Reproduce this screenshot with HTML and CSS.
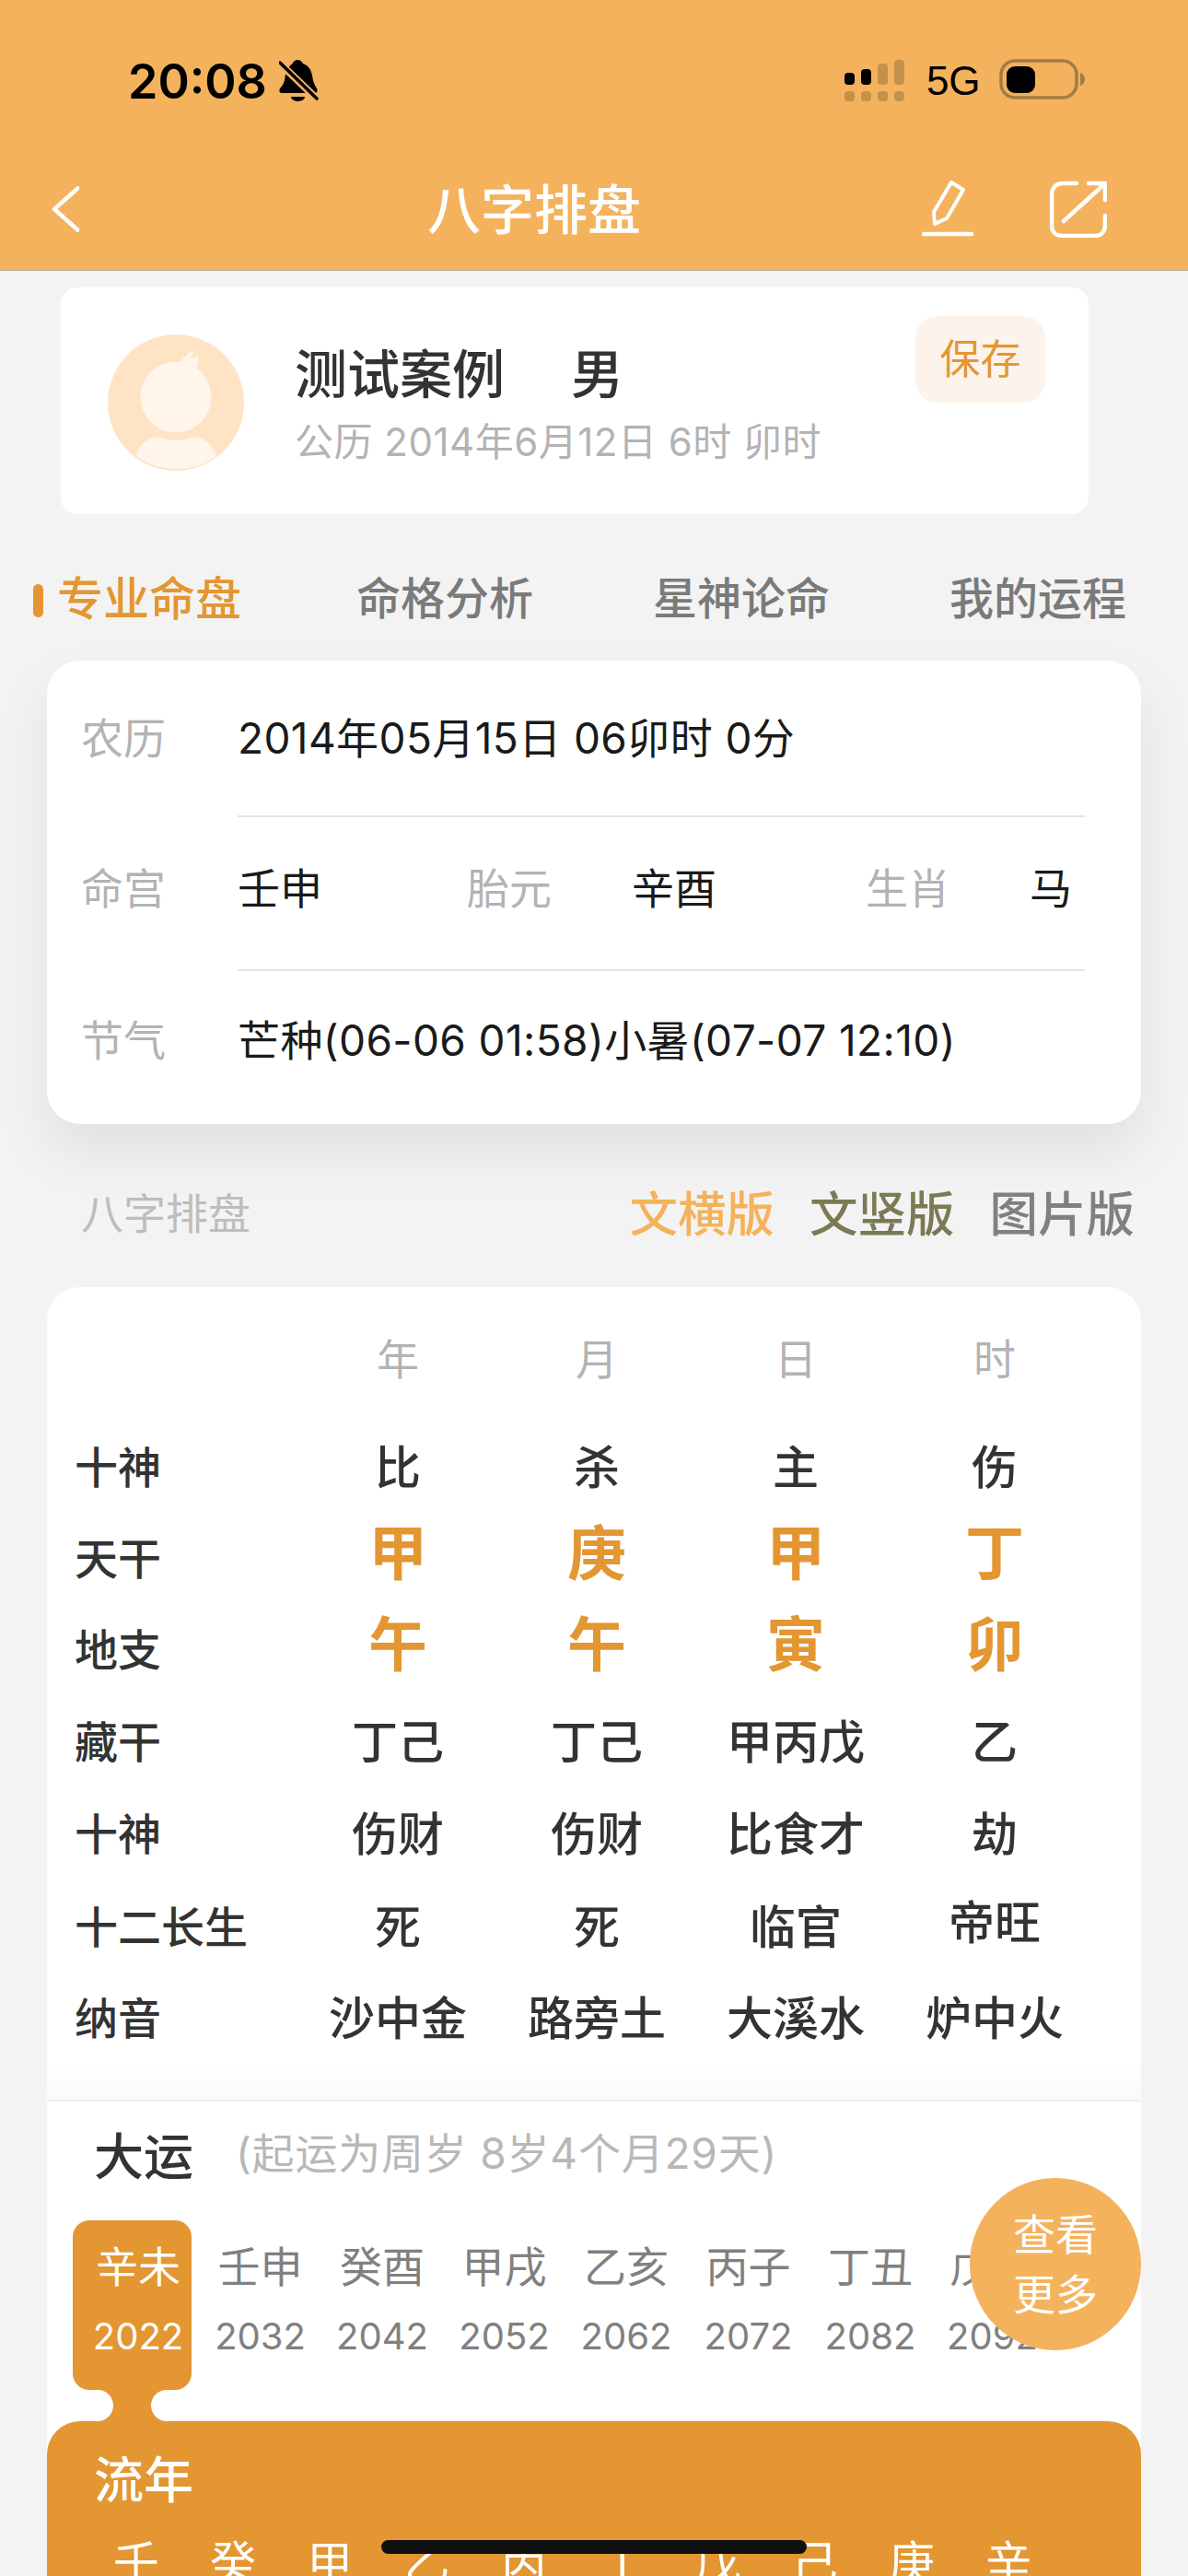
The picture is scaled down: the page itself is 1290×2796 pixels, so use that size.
FILE: index.html
```html
<!DOCTYPE html>
<html lang="zh">
<head>
    <meta charset="utf-8">
    <title>八字排盘</title>
    <link rel="stylesheet" href="styles.css">
</head>
<body>
<div class="page">
    <div class="header">
        <div class="status">
            <span class="time">20:08</span>
            <svg class="bell" width="44" height="47" viewBox="0 0 44 47">
                <path d="M20 0c3 0 5 2 6 4 6 2 9 7 10 13 1 7 3 11 5 14 1 2 1 5-2 5H3c-3 0-3-3-2-5 3-3 5-7 5.500-12 .5-7 4-12 8-15 1-2 3-4 5.500-4z"/>
                <path d="M13 40h15a7.500 5 0 0 1-15 0z"/>
                <path d="M0 3l42 40" stroke="#f4b25c" stroke-width="8"/>
                <path d="M1 3l40 39" stroke="#000" stroke-width="3.500" stroke-linecap="round"/>
            </svg>
            <svg class="signal" width="66" height="46" viewBox="0 0 66 46">
                <rect x="0" y="15" width="11" height="13" rx="4"/>
                <rect x="18" y="11" width="11" height="17" rx="4"/>
                <rect class="dim" x="36" y="5" width="11" height="23" rx="4"/>
                <rect class="dim" x="54" y="1" width="11" height="27" rx="4"/>
                <rect class="dim" x="0" y="35" width="11" height="11" rx="4"/>
                <rect class="dim" x="18" y="35" width="11" height="11" rx="4"/>
                <rect class="dim" x="36" y="35" width="11" height="11" rx="4"/>
                <rect class="dim" x="54" y="35" width="11" height="11" rx="4"/>
            </svg>
            <span class="net">5G</span>
            <svg class="battery" width="94" height="44" viewBox="0 0 94 44">
                <rect x="2" y="2" width="82" height="40" rx="15" fill="none" stroke="#a37b45" stroke-width="3.500"/>
                <rect x="8" y="8" width="31" height="29" rx="9"/>
                <path d="M88 15c3 1 5 4 5 7s-2 6-5 7z" fill="#a37b45"/>
            </svg>
        </div>
        <div class="nav">
            <svg class="back" width="30" height="50" viewBox="0 0 30 50">
                <path d="M29 2L3 25l26 23" fill="none" stroke="#fff" stroke-width="4.500" stroke-linecap="round" stroke-linejoin="round"/>
            </svg>
            <span class="nav-title">八字排盘</span>
            <svg class="pen" width="58" height="62" viewBox="0 0 58 62">
                <path d="M14 47l-1-13 19-32 13 8-18 31z" fill="none" stroke="#fff" stroke-width="4" stroke-linejoin="round"/>
                <path d="M2 58h52" stroke="#fff" stroke-width="4.500" stroke-linecap="round"/>
            </svg>
            <svg class="share" width="62" height="62" viewBox="0 0 62 62">
                <path d="M29 3H14C7 3 2 8 2 15v34c0 7 5 11 12 11h35c7 0 11-5 11-11V38" fill="none" stroke="#fff" stroke-width="4.500" stroke-linecap="round"/>
                <path d="M15 44L59 4M42 3h18v18" fill="none" stroke="#fff" stroke-width="4.500" stroke-linecap="round" stroke-linejoin="round"/>
            </svg>
        </div>
    </div>

    <div class="case-card">
        <svg class="avatar" width="148" height="148" viewBox="0 0 148 148">
            <circle cx="74" cy="74" r="74" fill="#fee3c4"/>
            <circle cx="74" cy="68" r="38.500" fill="#fff5ea"/>
            <path d="M78 30c7-8 12-12 15-12 1 2-2 7-4 9 3-2 9-4 9-3 1 6-1 12-2 13z" fill="#fff5ea"/>
            <path d="M31 132c2-14 15-20 22-21 7 1 13 4 21 4 9 0 14-3 19-4 12 1 22 9 25 21A74 74 0 0 1 31 132z" fill="#fff5ea"/>
        </svg>
        <div class="case-text">
            <div class="case-name"><span>测试案例</span><span>男</span></div>
            <div class="case-date">公历 2014年6月12日 6时 卯时</div>
        </div>
        <div class="save">保存</div>
    </div>

    <div class="tabs">
        <span class="tab active">专业命盘</span>
        <span class="tab">命格分析</span>
        <span class="tab">星神论命</span>
        <span class="tab">我的运程</span>
    </div>

    <div class="info-card">
        <div class="info-row first">
            <span class="key">农历</span>
            <span class="wide">2014年05月15日 06卯时 0分</span>
        </div>
        <div class="info-line"></div>
        <div class="info-row middle">
            <span class="key">命宫</span>
            <span>壬申</span>
            <span class="key">胎元</span>
            <span>辛酉</span>
            <span class="key">生肖</span>
            <span>马</span>
        </div>
        <div class="info-line"></div>
        <div class="info-row last">
            <span class="key">节气</span>
            <span class="wide">芒种(06-06 01:58)小暑(07-07 12:10)</span>
        </div>
    </div>

    <div class="section-head">
        <span class="section-title">八字排盘</span>
        <div class="versions">
            <span class="v-heng">文横版</span>
            <span class="v-shu">文竖版</span>
            <span class="v-pic">图片版</span>
        </div>
    </div>

    <div class="main-card">
        <div class="bazi">
            <span class="th"></span><span class="th">年</span><span class="th">月</span><span class="th">日</span><span class="th">时</span>
            <span class="name">十神</span><span>比</span><span>杀</span><span>主</span><span>伤</span>
            <span class="name">天干</span><span class="big">甲</span><span class="big">庚</span><span class="big">甲</span><span class="big">丁</span>
            <span class="name">地支</span><span class="big">午</span><span class="big">午</span><span class="big">寅</span><span class="big">卯</span>
            <span class="name">藏干</span><span>丁己</span><span>丁己</span><span>甲丙戊</span><span>乙</span>
            <span class="name">十神</span><span>伤财</span><span>伤财</span><span>比食才</span><span>劫</span>
            <span class="name">十二长生</span><span>死</span><span>死</span><span>临官</span><span class="raised">帝旺</span>
            <span class="name">纳音</span><span>沙中金</span><span>路旁土</span><span>大溪水</span><span>炉中火</span>
        </div>
        <div class="fade"></div>

        <div class="yun-head">
            <span class="yun-title">大运</span>
            <span class="yun-note">(起运为周岁 8岁4个月29天)</span>
        </div>

        <div class="yun-wrap">
            <div class="yun-list">
                <div class="yun-item selected">
                    <div class="yun-box"><span>辛未</span><em>2022</em></div>
                    <div class="neck"></div>
                </div>
                <div class="yun-item"><div class="yun-box"><span>壬申</span><em>2032</em></div></div>
                <div class="yun-item"><div class="yun-box"><span>癸酉</span><em>2042</em></div></div>
                <div class="yun-item"><div class="yun-box"><span>甲戌</span><em>2052</em></div></div>
                <div class="yun-item"><div class="yun-box"><span>乙亥</span><em>2062</em></div></div>
                <div class="yun-item"><div class="yun-box"><span>丙子</span><em>2072</em></div></div>
                <div class="yun-item"><div class="yun-box"><span>丁丑</span><em>2082</em></div></div>
                <div class="yun-item"><div class="yun-box"><span>戊寅</span><em>2092</em></div></div>
            </div>
            <div class="more">查看<br>更多</div>
        </div>

        <div class="liunian">
            <div class="liunian-title">流年</div>
            <div class="liunian-list">
                <span>壬</span><span>癸</span><span>甲</span><span>乙</span><span>丙</span><span>丁</span><span>戊</span><span>己</span><span>庚</span><span>辛</span>
            </div>
        </div>
    </div>

    <div class="home-bar"></div>
</div>
</body>
</html>
```

FILE: styles.css
```css
* { box-sizing: border-box; }
html, body { margin: 0; padding: 0; }
body { background: #f3f3f3; font-family: Inter, "Noto Sans CJK SC", sans-serif; color: #333; }

.page { position: relative; width: 1290px; height: 2796px; overflow: hidden; background: #f3f3f3; }

/* 顶部 */
.header { height: 294px; background: #f4b25c; border-bottom: 1px solid #b4aa9a; }
.status { display: flex; align-items: flex-start; height: 195px; padding: 64px 0 0 139px; color: #000; }
.time { font-weight: 600; font-size: 52px; line-height: 50px; }
.bell { margin: 1px 0 0 13px; }
.signal { margin-left: 570px; }
.signal .dim { fill: #c39149; }
.net { margin: 4px 0 0 23px; width: 56px; font-family: "Liberation Sans", sans-serif; font-size: 44px; line-height: 40px; }
.battery { margin: 0 0 0 23px; }
.nav { display: flex; align-items: center; height: 70px; padding-left: 56px; }
.back, .pen, .share { margin-top: -6px; }
.nav-title { margin: -4px 0 0 378px; width: 232px; color: #fff; font-size: 58px; font-weight: 500; line-height: 68px; white-space: nowrap; }
.pen { margin-left: 305px; }
.share { margin-left: 81px; }

/* 案例 */
.case-card { display: flex; height: 246px; margin: 18px 108px 0 66px; padding: 51px 47px 0 51px; background: #fff; border-radius: 18px; }
.avatar { flex: none; }
.case-text { flex: 1; margin-left: 55px; }
.case-name { display: flex; gap: 72px; margin-top: 13px; font-size: 57px; font-weight: 500; line-height: 62px; color: #333; }
.case-date { margin-top: 17px; font-size: 42px; letter-spacing: .5px; line-height: 50px; color: #b3b3b3; white-space: nowrap; }
.save { width: 141px; height: 94px; margin-top: -20px; border-radius: 24px; background: #fcf3ea; color: #e39632; font-size: 44px; line-height: 94px; text-align: center; }

/* 标签 */
.tabs { display: flex; align-items: center; gap: 130px; height: 159px; padding: 24px 0 0 62px; }
.tab { position: relative; font-size: 48px; font-weight: 500; line-height: 60px; color: #7a7a7a; white-space: nowrap; }
.tab.active { margin-right: -5px; color: #e39632; font-size: 50px; }
.tab.active::before { content: ""; position: absolute; left: -26px; top: 14px; width: 11px; height: 36px; border-radius: 6px; background: #e39632; }

/* 农历信息 */
.info-card { height: 503px; margin: 0 51px; padding-left: 37px; background: #fff; border-radius: 36px; box-shadow: 0 30px 60px rgba(0, 0, 0, .08); font-size: 46px; color: #1a1a1a; }
.info-row { display: grid; grid-template-columns: 170px 1fr; align-items: center; white-space: nowrap; }
.info-row.first { height: 168px; padding-bottom: 7px; }
.info-row.middle { grid-template-columns: 170px 249px 179px 254px 178px 1fr; height: 165px; padding-bottom: 17px; }
.info-row.last { height: 166px; padding-bottom: 22px; }
.info-line { height: 2px; margin: 0 61px 0 170px; background: #e4e4e4; }
.key { color: #b3b3b3; }
.wide { letter-spacing: .4px; }

/* 版本切换 */
.section-head { display: flex; align-items: center; justify-content: space-between; height: 177px; padding: 11px 58px 0 88px; }
.section-title { font-size: 46px; color: #bdbdbd; }
.versions { display: flex; gap: 38px; font-size: 52.500px; font-weight: 500; }
.v-heng { color: #f4b25c; }
.v-shu { color: #7a7a55; }
.v-pic { color: #808080; }

/* 命盘 */
.main-card { margin: 0 51px; padding-top: 28px; background: #fff; border-radius: 36px 36px 0 0; }
.bazi { display: grid; grid-template-columns: 243px repeat(4, 216px); grid-template-rows: 118px 100px 98px 100px 100px 100px 102px 96px; align-items: center; padding-left: 30px; font-size: 50px; font-weight: 500; line-height: 56px; color: #333; text-align: center; white-space: nowrap; }
.th { color: #b3b3b3; font-size: 46px; font-weight: 400; padding-bottom: 18px; }
.name { font-size: 47px; text-align: left; }
.big { padding-bottom: 13px; color: #e39632; font-size: 64px; font-weight: 700; line-height: 70px; }
.raised { padding-bottom: 10px; }
.fade { height: 42px; background: linear-gradient(#fff, #f9f9f9); border-bottom: 2px solid #eee; }

.yun-head { display: flex; align-items: center; height: 112px; padding-left: 51px; }
.yun-title { width: 154px; font-size: 54px; font-weight: 500; color: #333; }
.yun-note { margin-top: -6px; font-size: 46px; letter-spacing: .8px; color: #b8b8b8; white-space: nowrap; }

.yun-wrap { position: relative; margin-top: 17px; }
.yun-list { display: flex; padding-left: 28px; }
.yun-item { flex: none; width: 132.500px; }
.yun-box { display: flex; flex-direction: column; align-items: center; width: 129px; height: 184px; padding: 20px 0 0 13px; color: #808080; }
.yun-box span { font-size: 46px; line-height: 60px; white-space: nowrap; }
.yun-box em { margin-top: 22px; font-size: 40px; font-style: normal; line-height: 48px; }
.selected .yun-box { border-radius: 18px; background: #e39632; color: #fff; }
.neck { position: relative; width: 129px; height: 34px; background: #e39632; }
.neck::before, .neck::after { content: ""; position: absolute; top: 0; width: 44px; height: 34px; background: #fff; }
.neck::before { left: 0; border-radius: 0 17px 17px 0; }
.neck::after { right: 0; border-radius: 17px 0 0 17px; }
.more { position: absolute; right: 0; top: -46px; width: 186px; height: 187px; padding-top: 29px; border-radius: 50%; background: #f4b25c; color: #fff; font-size: 46px; line-height: 65px; text-align: center; }

.liunian { height: 400px; padding: 32px 0 0 44px; background: #e39632; border-radius: 36px 36px 0 0; color: #fff; }
.liunian-title { margin-left: 7px; font-size: 54px; font-weight: 500; line-height: 66px; }
.liunian-list { display: grid; grid-template-columns: repeat(10, 105.300px); margin-top: 24px; font-size: 50px; line-height: 64px; text-align: center; }

.home-bar { position: absolute; left: 414px; top: 2757px; width: 462px; height: 15px; border-radius: 8px; background: #111; }
```
